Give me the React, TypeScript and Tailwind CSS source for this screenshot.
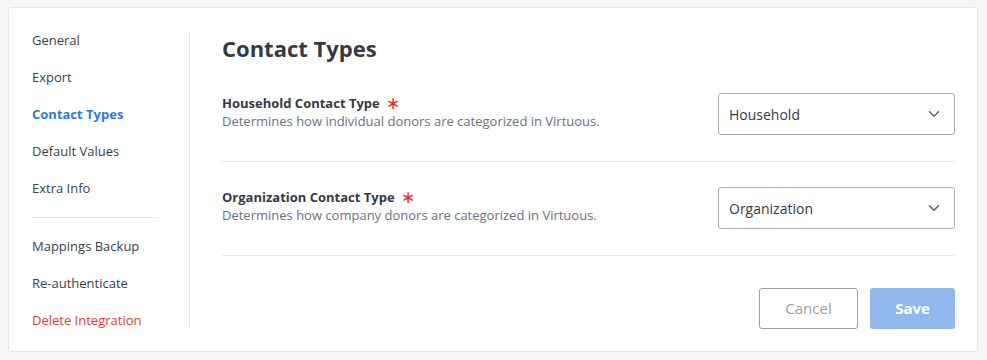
import React from 'react';
import { ChevronDown } from 'lucide-react';

const NAV_TOP = ['General', 'Export', 'Contact Types', 'Default Values', 'Extra Info'];
const NAV_BOTTOM = ['Mappings Backup', 'Re-authenticate'];

const FIELDS = [
  {
    label: 'Household Contact Type',
    desc: 'Determines how individual donors are categorized in Virtuous.',
    value: 'Household',
  },
  {
    label: 'Organization Contact Type',
    desc: 'Determines how company donors are categorized in Virtuous.',
    value: 'Organization',
  },
];

const App: React.FC = () => {
  return (
    <div
      className="min-h-[360px] bg-[#f5f6f8] pt-[7px] pl-[8px] pr-[9px] pb-[8px]"
      style={{ fontFamily: '"Open Sans", sans-serif' }}
    >
      <div className="flex h-[345px] rounded-[3px] border border-[#e4e6ea] bg-white">
        {/* Sidebar */}
        <div className="w-[180px] shrink-0 pl-[23px] pr-[31px] pt-[14px]">
          <nav className="flex flex-col">
            {NAV_TOP.map((item) => (
              <div
                key={item}
                className={`h-[37px] flex items-center text-[13px] ${
                  item === 'Contact Types' ? 'font-bold text-[#2f7ad8]' : 'text-[#3a3f47]'
                }`}
              >
                {item}
              </div>
            ))}
          </nav>
          <div className="my-[10px] h-px bg-[#e5e7ea]" />
          <nav className="flex flex-col">
            {NAV_BOTTOM.map((item) => (
              <div key={item} className="h-[37px] flex items-center text-[13px] text-[#3a3f47]">
                {item}
              </div>
            ))}
            <div className="h-[37px] flex items-center text-[13px] text-[#d8423a]">Delete Integration</div>
          </nav>
        </div>

        {/* Divider */}
        <div className="mt-[24px] h-[297px] w-px bg-[#e5e7ea]" />

        {/* Main */}
        <div className="flex-1 pl-[32px] pr-[22px] pt-[26px]">
          <h1 className="text-[22px] font-bold leading-[28px] text-[#333a44]">Contact Types</h1>
          <div className="mt-[31px]">
            {FIELDS.map((f, i) => (
              <div
                key={f.label}
                className={`flex items-start border-b border-[#e7e9ec] pb-[26px] ${i === 0 ? 'pt-0' : 'pt-[25px]'}`}
              >
                <div className="flex-1 pt-[1px]">
                  <div className="flex items-center text-[13px] font-bold leading-[18px] text-[#333a44]">
                    {f.label}
                    <span className="ml-[6px] text-[17px] font-normal leading-[18px] text-[#d8342c]">∗</span>
                  </div>
                  <div className="text-[13px] leading-[18px] text-[#6b7280]">{f.desc}</div>
                </div>
                <div className="flex h-[42px] w-[237px] items-center justify-between rounded-[3px] border border-[#a9aeb5] pl-[10px] pr-[11px] text-[14px] text-[#333a44]">
                  {f.value}
                  <ChevronDown size={18} strokeWidth={2} className="text-[#5b616a]" />
                </div>
              </div>
            ))}
          </div>
          <div className="mt-[32px] flex justify-end gap-[12px]">
            <button className="h-[41px] w-[99px] rounded-[3px] border border-[#9aa0a7] bg-white text-[15px] text-[#9aa0a7]">
              Cancel
            </button>
            <button className="h-[41px] w-[85px] rounded-[3px] bg-[#90b8ec] text-[15px] font-bold text-white">
              Save
            </button>
          </div>
        </div>
      </div>
    </div>
  );
};

export default App;
